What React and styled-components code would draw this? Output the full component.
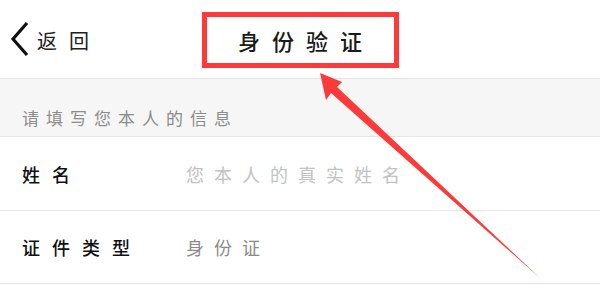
import React from "react";
import styled, { createGlobalStyle } from "styled-components";

const Global = createGlobalStyle`
  html, body { margin: 0; padding: 0; background: #fff; }
  body { font-family: "Noto Sans CJK SC", "Noto Sans", sans-serif; }
`;

const Page = styled.div`
  position: relative;
  width: 600px;
  height: 299px;
  overflow: hidden;
  background: #fff;
`;

const Header = styled.header`
  height: 78px;
  border-bottom: 1px solid #e4e4e4;
  display: grid;
  grid-template-columns: 1fr auto 1fr;
  align-items: center;
`;

const Back = styled.div`
  display: flex;
  align-items: center;
  gap: 7px;
  padding-left: 10px;
`;

const BackText = styled.span`
  font-size: 20px;
  letter-spacing: 12px;
  color: #222;
  margin-top: 2px;
`;

const TitleBox = styled.div`
  width: 197px;
  height: 56px;
  box-sizing: border-box;
  border: 5px solid #fc3a3a;
  display: flex;
  align-items: center;
  justify-content: center;
  margin-top: 2px;
`;

const Title = styled.h1`
  margin: 0 0 0 12px;
  font-size: 22px;
  font-weight: 500;
  letter-spacing: 12px;
  color: #1a1a1a;
`;

const Section = styled.div`
  height: 58px;
  background: #f6f6f6;
  border-bottom: 1px solid #e6e6e6;
  box-sizing: border-box;
  display: flex;
  align-items: flex-end;
  padding: 0 0 6px 22px;
`;

const SectionText = styled.span`
  font-size: 17px;
  letter-spacing: 7px;
  color: #8c8c8c;
`;

const Row = styled.div`
  height: ${(p) => p.$h}px;
  border-bottom: 1px solid #e6e6e6;
  box-sizing: border-box;
  display: flex;
  align-items: center;
  padding-left: 22px;
`;

const Label = styled.span`
  width: 164px;
  font-size: 18px;
  font-weight: 500;
  letter-spacing: 12px;
  color: #111;
`;

const Value = styled.span`
  font-size: 18px;
  letter-spacing: ${(p) => p.$ls}px;
  color: ${(p) => p.$c};
`;

const Overlay = styled.svg`
  position: absolute;
  left: 0;
  top: 0;
  pointer-events: none;
`;

export default function App() {
  return (
    <Page>
      <Global />
      <Header>
        <Back>
          <svg width="20" height="36" viewBox="0 0 20 36">
            <polyline points="17,2 3,18 17,34" fill="none" stroke="#111" strokeWidth="3.2" />
          </svg>
          <BackText>返回</BackText>
        </Back>
        <TitleBox>
          <Title>身份验证</Title>
        </TitleBox>
        <div />
      </Header>
      <Section>
        <SectionText>请填写您本人的信息</SectionText>
      </Section>
      <Row $h={74}>
        <Label>姓名</Label>
        <Value $c="#c2c2c2" $ls={10}>您本人的真实姓名</Value>
      </Row>
      <Row $h={73}>
        <Label>证件类型</Label>
        <Value $c="#8a8a8a" $ls={10}>身份证</Value>
      </Row>
      <Overlay width="600" height="299" viewBox="0 0 600 299">
        <polygon points="320,73 342,82 337,87 540,278 331,93 326,100" fill="#fc3a3a" />
      </Overlay>
    </Page>
  );
}
